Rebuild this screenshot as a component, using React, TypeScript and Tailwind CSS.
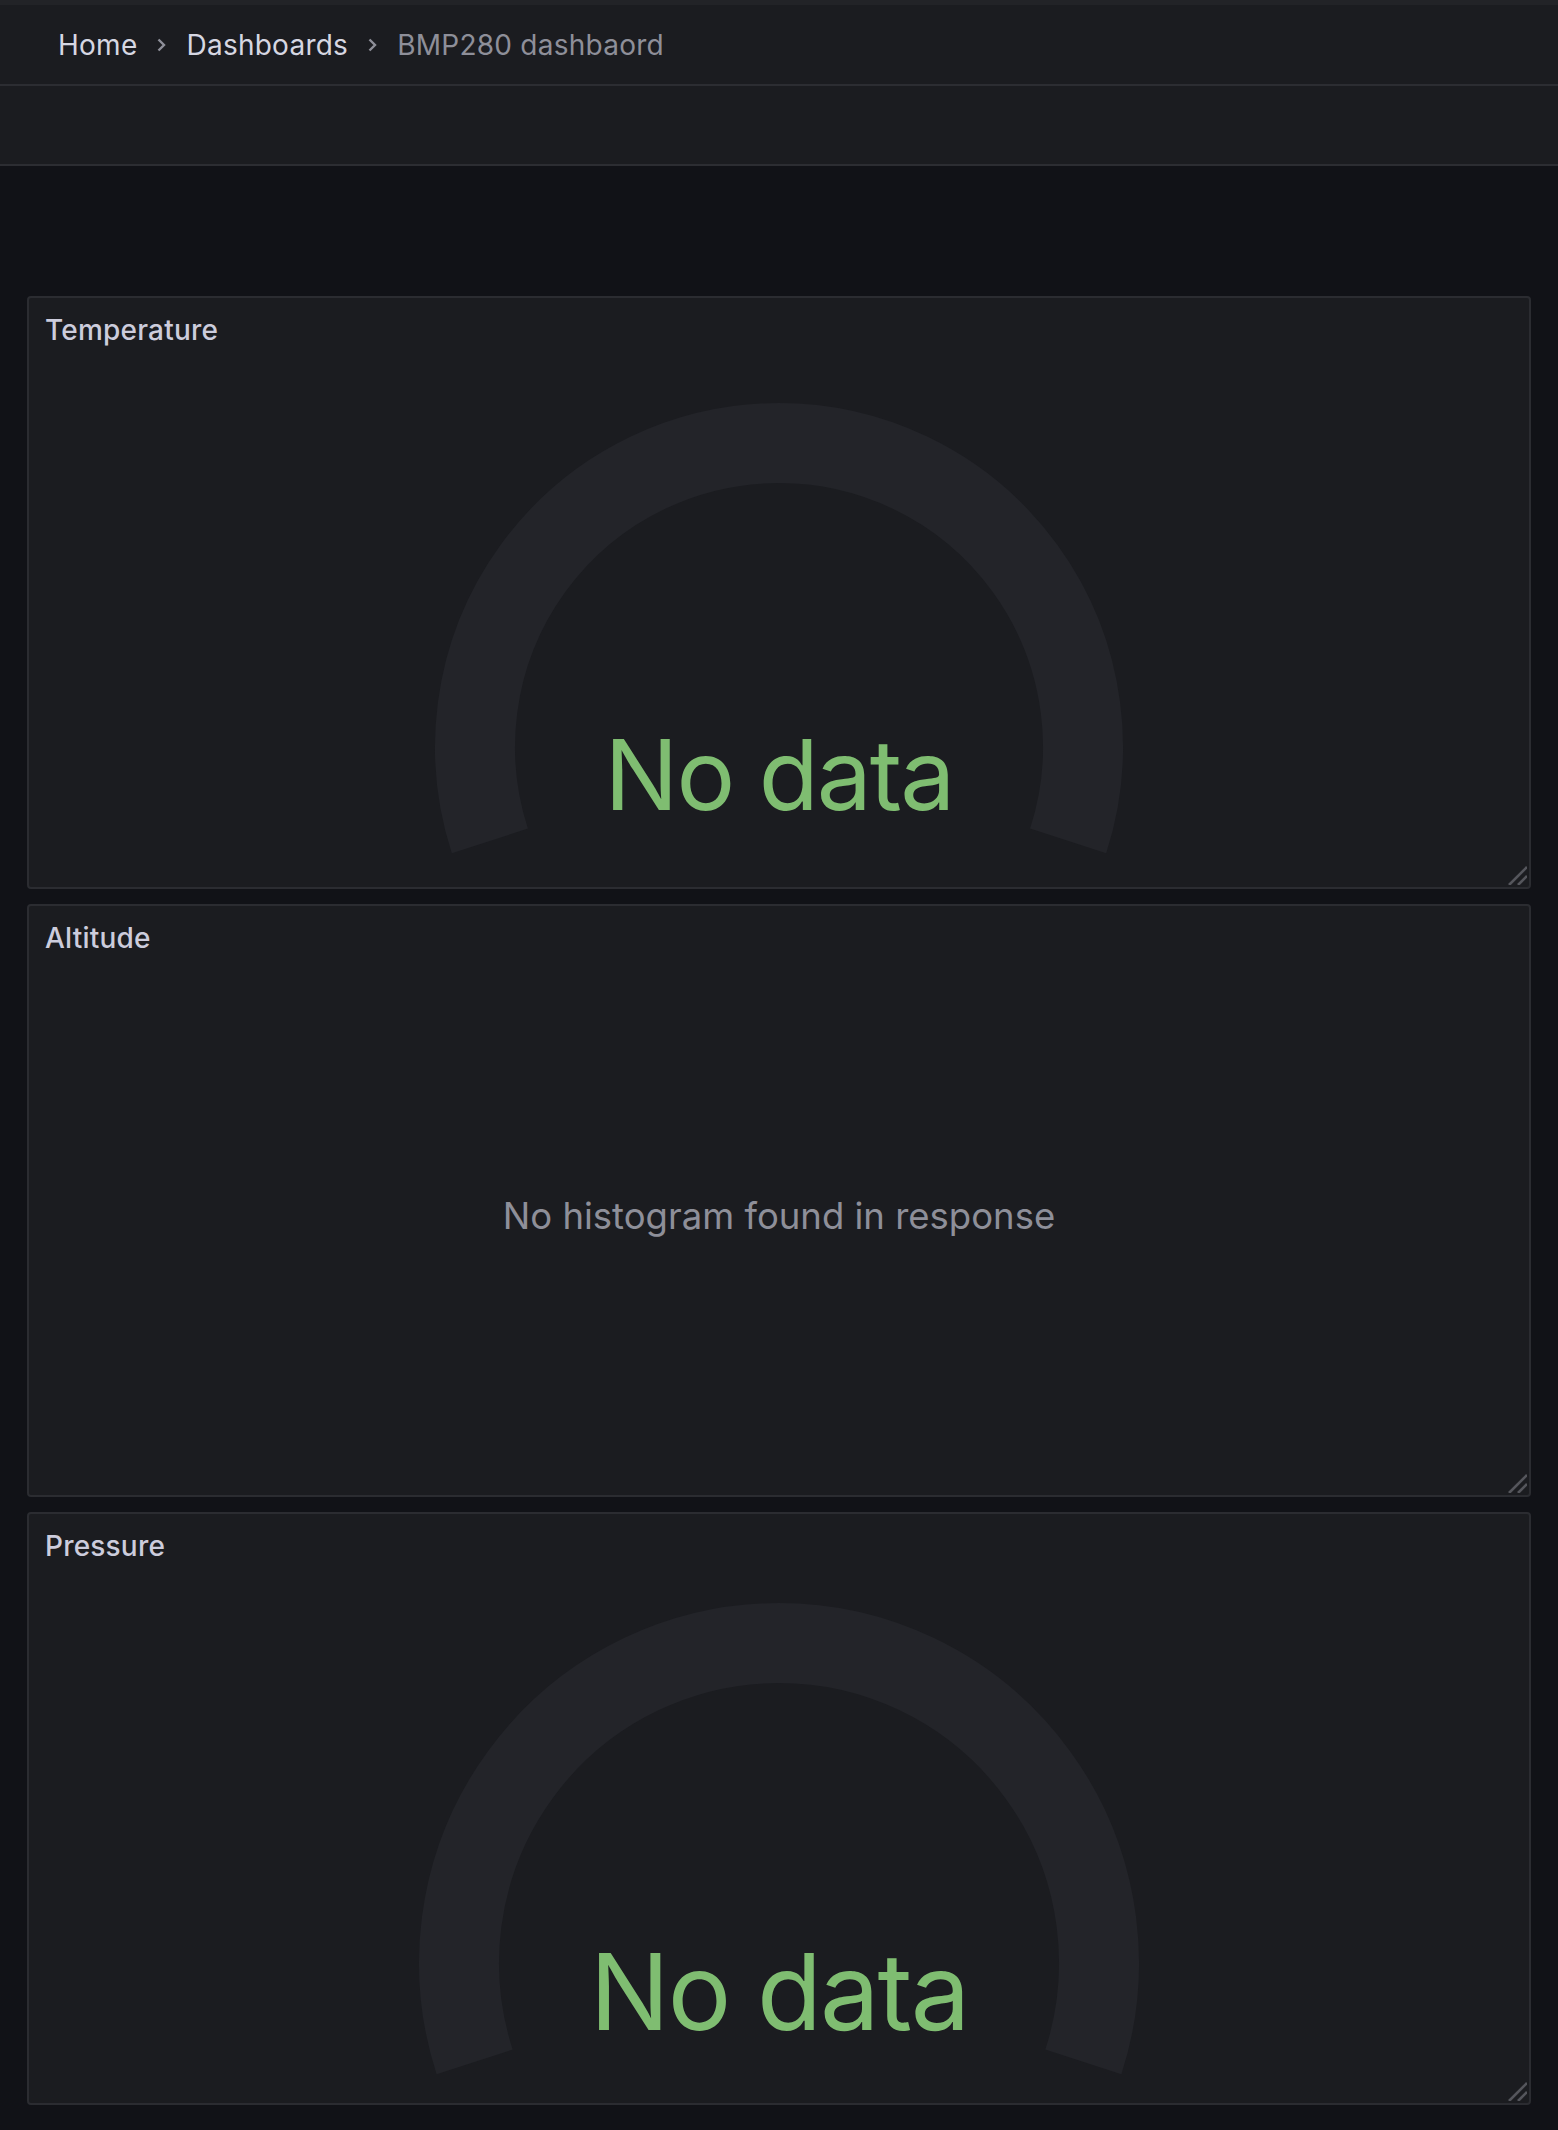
import React from "react";

const Chevron = () => (
  <div className="w-[49px] flex justify-center items-center">
    <svg width="9" height="14" viewBox="0 0 9 14">
      <polyline points="1.5,1.5 7,7 1.5,12.5" fill="none" stroke="#8e8f99" strokeWidth="2.4" />
    </svg>
  </div>
);

const ResizeHandle = () => (
  <svg className="absolute right-[2px] bottom-[2px]" width="20" height="20" viewBox="0 0 20 20">
    <line x1="2" y1="20" x2="20" y2="2" stroke="#55565c" strokeWidth="2.6" />
    <line x1="11" y1="20" x2="20" y2="11" stroke="#55565c" strokeWidth="2.6" />
  </svg>
);

function arcPath(cx: number, cy: number, r: number) {
  const a = (18 * Math.PI) / 180;
  const x1 = cx - r * Math.cos(a);
  const y1 = cy + r * Math.sin(a);
  const x2 = cx + r * Math.cos(a);
  const y2 = cy + r * Math.sin(a);
  return `M ${x1} ${y1} A ${r} ${r} 0 1 1 ${x2} ${y2}`;
}

const Gauge = ({ r, fontSize, textY }: { r: number; fontSize: number; textY: number }) => (
  <svg className="block w-full h-full" viewBox="0 0 1500 525" preserveAspectRatio="xMidYMin meet">
    <path d={arcPath(750, 385, r)} fill="none" stroke="#232429" strokeWidth="80" />
    <text
      x="750"
      y={textY}
      textAnchor="middle"
      fill="#7fbd71"
      fontSize={fontSize}
      fontFamily="Inter, sans-serif"
      letterSpacing="-2"
    >
      No data
    </text>
  </svg>
);

const Panel = ({ title, children }: { title: string; children: React.ReactNode }) => (
  <section className="relative h-[593px] flex flex-col rounded-[4px] border-2 border-[#2b2c31] bg-[#1b1c20]">
    <div className="h-[64px] shrink-0 flex items-center px-[16px]">
      <h2 className="text-[28px] font-medium text-[#ccccdc] leading-none tracking-[0.2px]">{title}</h2>
    </div>
    <div className="flex-1 min-h-0">{children}</div>
    <ResizeHandle />
  </section>
);

export default function App() {
  return (
    <div className="min-h-[2130px] bg-[#111217] font-['Inter',sans-serif]">
      <div className="h-[5px] bg-[#222327]" />
      <header className="h-[81px] border-b-2 border-[#2c2d32] bg-[#1b1c20] flex items-center pl-[58px] text-[28px] tracking-[0.25px]">
        <span className="text-[#d6d7e2]">Home</span>
        <Chevron />
        <span className="text-[#d6d7e2]">Dashboards</span>
        <Chevron />
        <span className="text-[#8e8f99]">BMP280 dashbaord</span>
      </header>
      <div className="h-[80px] border-b-2 border-[#2c2d32] bg-[#1b1c20]" />
      <main className="px-[27px] pt-[130px] pb-[25px] flex flex-col gap-[15px]">
        <Panel title="Temperature">
          <Gauge r={304} fontSize={98} textY={448} />
        </Panel>
        <Panel title="Altitude">
          <div className="h-full flex items-center justify-center pb-[32px]">
            <span className="text-[36.5px] text-[#8e8f99]">No histogram found in response</span>
          </div>
        </Panel>
        <Panel title="Pressure">
          <Gauge r={320} fontSize={106} textY={452} />
        </Panel>
      </main>
    </div>
  );
}
